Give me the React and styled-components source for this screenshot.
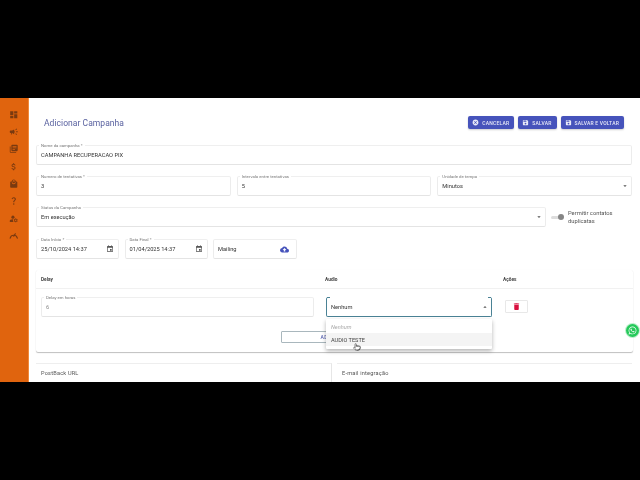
import React from "react";
import styled, { createGlobalStyle } from "styled-components";
import {
  MdDashboard, MdCampaign, MdLibraryBooks, MdAttachMoney, MdLocalMall, MdQuestionMark,
  MdManageAccounts, MdCancel, MdSave, MdCloudUpload, MdDelete,
  MdArrowDropDown, MdArrowDropUp, MdEvent,
} from "react-icons/md";
import { FaWhatsapp } from "react-icons/fa";
import { Pointer as PointerIcon } from "lucide-react";

const Global = createGlobalStyle`
  html, body { margin: 0; padding: 0; background: #000; width: 640px; height: 480px; overflow: hidden; }
  body { font-family: Roboto, "Liberation Sans", sans-serif; }
`;
const Frame = styled.div`
  margin-top: 98px; width: 640px; height: 284px; display: flex; overflow: hidden;
  background: #fff; position: relative; filter: blur(0.35px);
`;
const Sidebar = styled.nav`
  width: 28px; flex: none; background: #e0640e; border-right: 1px solid #f08a3c;
  display: flex; flex-direction: column; align-items: center; padding-top: 8px;
`;
const NavIcon = styled.span`
  height: 17.3px; display: flex; align-items: center; justify-content: center;
  color: #7a3a10; font-size: 9.5px;
`;
const Main = styled.main`
  flex: 1; min-width: 0; padding: 0 8px 0 7px; display: flex; flex-direction: column;
`;
const Header = styled.header`
  height: 47px; box-sizing: border-box; flex: none; display: flex; align-items: center; justify-content: space-between;
  padding: 2px 8px 0 8px;
`;
const Title = styled.h1`
  margin: 0; font-size: 8.5px; line-height: 12px; font-weight: 400; color: #5a62a0; letter-spacing: .05px;
`;
const Actions = styled.div`
  display: flex; gap: 4px;
`;
const Button = styled.button`
  height: 13px; border: 0; padding: 0 5px 0 4px; border-radius: 2px; background: #4653bb; color: #e8eaf8;
  display: flex; align-items: center; gap: 3px; font: 500 5px Roboto, sans-serif; letter-spacing: .2px;
  box-shadow: 0 1px 2px rgba(0,0,0,.2);
  svg { font-size: 7px; }
`;
const Row = styled.div`
  display: flex; gap: ${p => p.$gap ?? 6}px; margin-bottom: ${p => p.$mb ?? 11}px; align-items: center;
`;
const Field = styled.div`
  position: relative; flex: ${p => p.$w ? `0 0 ${p.$w}px` : 1}; min-width: 0; height: ${p => p.$h || 20}px;
  margin-left: ${p => p.$ml || 0}px;
  box-sizing: border-box; border: 1px solid ${p => p.$focus ? "#4a8295" : "#ececec"};
  border-bottom-color: ${p => p.$focus ? "#4a8295" : "#e4e4e4"};
  border-top-color: ${p => p.$focus ? "transparent" : "#efefef"};
  border-radius: 2px; display: flex; align-items: center; justify-content: space-between;
  padding: 0 4px 0 4px; font-size: 5.7px; color: ${p => p.$dim ? "#888" : "#333"};
  svg { color: #555; }
  ${p => p.$focus ? `
    &::before, &::after { content: ""; position: absolute; top: -1px; width: 3px; border-top: 1px solid #4a8295; }
    &::before { left: 0; }
    &::after { right: 0; }
  ` : ""}
`;
const Label = styled.label`
  position: absolute; top: -3px; left: 2px; padding: 0 2px; background: #fff;
  font-size: 4.3px; line-height: 5px; color: #777; white-space: nowrap;
`;
const DownArrow = styled(MdArrowDropDown)`
  margin-right: -2px; font-size: 8px;
`;
const UpArrow = styled(MdArrowDropUp)`
  margin-right: -2px; font-size: 8px;
`;
const Calendar = styled(MdEvent)`
  font-size: 8px;
`;
const Cloud = styled(MdCloudUpload)`
  && { color: #4653bb; }
  font-size: 9px; margin-right: 3px;
`;
const SwitchBox = styled.div`
  flex: 0 0 81px; display: flex; align-items: center; gap: 5px; font-size: 5.8px; line-height: 8.4px; color: #555;
`;
const Track = styled.span`
  position: relative; width: 12px; height: 3px; border-radius: 2px; background: #ddd; flex: none;
  &::after { content: ""; position: absolute; right: -1px; top: -2px; width: 6.5px; height: 6.5px; border-radius: 50%; background: #858585; }
`;
const Card = styled.section`
  position: relative; width: 597px; height: 82px; flex: none; box-sizing: border-box; margin-bottom: 11px;
  border-radius: 2px; background: #fff; box-shadow: 0 1px 1px rgba(0,0,0,.25), 0 0 1px rgba(0,0,0,.05);
`;
const CardHead = styled.div`
  height: 19px; box-sizing: border-box; border-bottom: 1px solid #f1f1f1; display: grid; grid-template-columns: 284px 178px 1fr;
  align-items: center; padding-left: 5px; font-size: 4.8px; font-weight: 700; color: #444;
`;
const CardBody = styled.div`
  display: flex; padding: 8px 0 0 5px; align-items: flex-start;
`;
const DeleteButton = styled.button`
  width: 23px; height: 13px; margin: 3px 0 0 13px; border: 1px solid #e8e8e8; background: #fff; padding: 0;
  display: flex; align-items: center; justify-content: center; color: #d8103f; font-size: 9px; border-radius: 1px;
`;
const AddRow = styled.div`
  display: flex; padding: 0 0 0 245px; margin-top: 14px;
`;
const AddButton = styled.button`
  width: 108px; height: 12px; box-sizing: border-box; border: 1px solid #a9b7bd; background: #fff; border-radius: 1px;
  color: #5560b0; font: 500 5px Roboto, sans-serif; letter-spacing: .3px; padding: 0;
`;
const Menu = styled.ul`
  position: absolute; left: 290px; top: 49px; width: 166px; height: 30px; margin: 0; padding: 1px 0; box-sizing: border-box;
  list-style: none; background: #fff; border-radius: 1px; font-size: 5.6px; z-index: 3;
  box-shadow: 0 2px 4px rgba(0,0,0,.3);
`;
const MenuItem = styled.li`
  height: 13px; display: flex; align-items: center; padding-left: 5px;
  color: ${p => p.$muted ? "#aaa" : "#444"}; font-style: ${p => p.$muted ? "italic" : "normal"};
  background: ${p => p.$hover ? "#f4f4f4" : "transparent"};
`;
const Pointer = styled.span`
  position: absolute; left: 27px; top: 23.5px; color: #333; line-height: 0;
`;
const Whats = styled.span`
  position: absolute; left: 626px; top: 226px; width: 13px; height: 13px; border-radius: 50%;
  background: #25c95a; color: #fff; display: flex; align-items: center; justify-content: center; font-size: 9px; z-index: 4;
  box-shadow: 0 0 0 1px rgba(37,201,90,.3);
`;
const Bottom = styled.div`
  display: flex; gap: 5px; height: 20px;
`;
const BottomCell = styled.div`
  flex: ${p => p.$w ? `0 0 ${p.$w}px` : 1}; box-sizing: border-box; padding: 6px 0 0 5px;
  font-size: 5.6px; color: #555; border-top: 1px solid #eee; border-right: ${p => p.$line ? "1px solid #e6e6e6" : 0};
  letter-spacing: .2px;
`;

const Gauge = () => (
  <svg width="1em" height="1em" viewBox="0 0 24 24" fill="none" stroke="currentColor" strokeWidth="3" strokeLinecap="round">
    <path d="M3 18a9.2 9.2 0 0 1 18 0" />
    <path d="M12 13l4-6" />
  </svg>
);

const nav = [MdDashboard, MdCampaign, MdLibraryBooks, MdAttachMoney, MdLocalMall, MdQuestionMark, MdManageAccounts, Gauge];

export default function App() {
  return (
    <>
      <Global />
      <Frame>
        <Sidebar>
          {nav.map((I, i) => <NavIcon key={i}><I /></NavIcon>)}
        </Sidebar>
        <Main>
          <Header>
            <Title>Adicionar Campanha</Title>
            <Actions>
              <Button><MdCancel />CANCELAR</Button>
              <Button><MdSave />SALVAR</Button>
              <Button><MdSave />SALVAR E VOLTAR</Button>
            </Actions>
          </Header>
          <Row>
            <Field><Label>Nome da campanha *</Label>CAMPANHA RECUPERACAO PIX</Field>
          </Row>
          <Row>
            <Field><Label>Numero de tentativas *</Label>3</Field>
            <Field><Label>Intervalo entre tentativas</Label>5</Field>
            <Field><Label>Unidade de tempo</Label>Minutos<DownArrow /></Field>
          </Row>
          <Row $gap={5} $mb={12}>
            <Field $w={510}><Label>Status da Campanha</Label>Em execução<DownArrow /></Field>
            <SwitchBox><Track /><span>Permitir contatos duplicatas</span></SwitchBox>
          </Row>
          <Row $gap={5.5}>
            <Field $w={83}><Label>Data Início *</Label>25/10/2024 14:37<Calendar /></Field>
            <Field $w={83}><Label>Data Final *</Label>01/04/2025 14:37<Calendar /></Field>
            <Field $w={84}>Mailing<Cloud /></Field>
          </Row>
          <Card>
            <CardHead><span>Delay</span><span>Audio</span><span>Ações</span></CardHead>
            <CardBody>
              <Field $w={273} $dim><Label>Delay em horas</Label>6</Field>
              <Field $w={166} $h={20} $focus $ml={12}>Nenhum<UpArrow /></Field>
              <DeleteButton><MdDelete /></DeleteButton>
            </CardBody>
            <AddRow><AddButton>ADICIONAR</AddButton></AddRow>
            <Menu>
              <MenuItem $muted>Nenhum</MenuItem>
              <MenuItem $hover>AUDIO TESTE<Pointer><PointerIcon size={8} strokeWidth={1.6} /></Pointer></MenuItem>
            </Menu>
          </Card>
          <Bottom>
            <BottomCell $w={296} $line>PostBack URL</BottomCell>
            <BottomCell>E-mail integração</BottomCell>
          </Bottom>
        </Main>
        <Whats><FaWhatsapp /></Whats>
      </Frame>
    </>
  );
}
